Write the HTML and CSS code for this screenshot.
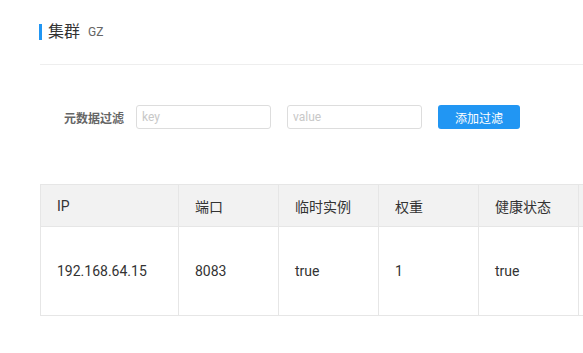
FILE: index.html
```html
<!DOCTYPE html>
<html>
<head>
    <title>集群 GZ</title>
    <link rel="stylesheet" href="styles.css">
</head>
<body>
    <div class="page">
        <div class="title-bar">
            <span class="title">集群</span>
            <span class="sub">GZ</span>
        </div>
        <div class="filter">
            <label class="filter-label">元数据过滤</label>
            <input class="filter-input" type="text" placeholder="key">
            <input class="filter-input" type="text" placeholder="value">
            <button class="btn">添加过滤</button>
        </div>
        <div class="table-wrap">
            <table class="grid">
                <colgroup>
                    <col style="width: 138px">
                    <col style="width: 100px">
                    <col style="width: 100px">
                    <col style="width: 100px">
                    <col style="width: 100px">
                    <col style="width: 120px">
                </colgroup>
                <thead>
                    <tr>
                        <th>IP</th>
                        <th>端口</th>
                        <th>临时实例</th>
                        <th>权重</th>
                        <th>健康状态</th>
                        <th></th>
                    </tr>
                </thead>
                <tbody>
                    <tr>
                        <td>192.168.64.15</td>
                        <td>8083</td>
                        <td>true</td>
                        <td>1</td>
                        <td>true</td>
                        <td></td>
                    </tr>
                </tbody>
            </table>
        </div>
    </div>
</body>
</html>
```

FILE: styles.css
```css
body {
    margin: 0;
    font-family: Roboto, "Noto Sans CJK SC", sans-serif;
    color: #333;
    background: #fff;
    overflow: hidden;
}

.page {
    padding: 24px 0 0 40px;
}

.title-bar {
    display: flex;
    align-items: center;
    height: 16px;
    padding-left: 6px;
    border-left: 3px solid #2196f3;
    margin-left: -1px;
}

.title {
    font-size: 16px;
    color: #333;
    line-height: 16px;
}

.sub {
    font-size: 12px;
    color: #666;
    margin-left: 8px;
    line-height: 16px;
}

.filter {
    display: flex;
    align-items: center;
    margin-top: 24px;
    border-top: 1px solid #eee;
    padding: 40px 0 0 24px;
}

.filter-label {
    font-size: 12px;
    font-weight: bold;
    color: #666;
    margin-right: 12px;
}

.filter-input {
    width: 135px;
    height: 24px;
    box-sizing: border-box;
    border: 1px solid #ddd;
    border-radius: 3px;
    padding: 0 5px;
    font-family: Roboto, sans-serif;
    font-size: 12px;
    margin-right: 16px;
    outline: none;
}

.filter-input::placeholder {
    color: #c8c8c8;
}

.btn {
    width: 82px;
    height: 24px;
    background: #2196f3;
    color: #fff;
    border: none;
    border-radius: 3px;
    font-family: "Noto Sans CJK SC", sans-serif;
    font-size: 12px;
    padding: 0;
}

.table-wrap {
    margin-top: 55px;
    width: 543px;
    overflow: hidden;
}

.grid {
    border-collapse: collapse;
    table-layout: fixed;
    width: 658px;
    font-size: 14px;
}

.grid th,
.grid td {
    border: 1px solid #e6e6e6;
    text-align: left;
    padding: 0 16px;
    font-weight: normal;
    color: #333;
}

.grid th {
    background: #f2f2f2;
    height: 41px;
}

.grid td {
    height: 88px;
}
```
